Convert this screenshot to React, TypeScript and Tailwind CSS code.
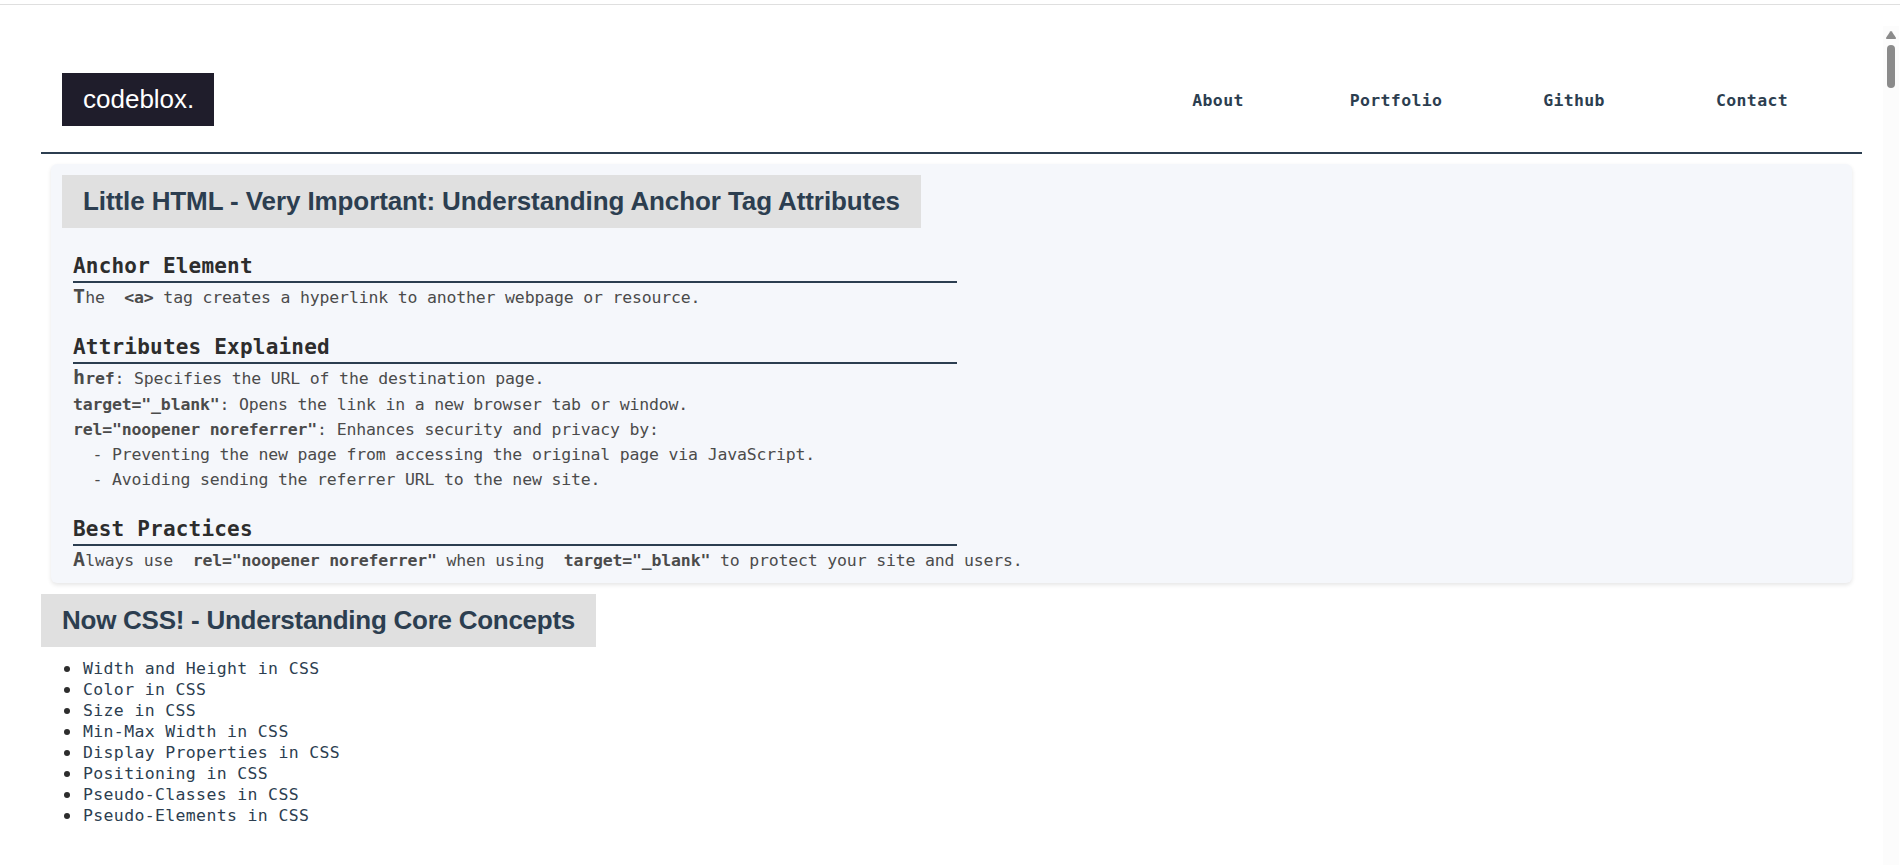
import React from "react";

const navItems = ["About", "Portfolio", "Github", "Contact"];

const topics = [
  "Width and Height in CSS",
  "Color in CSS",
  "Size in CSS",
  "Min-Max Width in CSS",
  "Display Properties in CSS",
  "Positioning in CSS",
  "Pseudo-Classes in CSS",
  "Pseudo-Elements in CSS",
];

function Topic({ title, children }: { title: string; children: React.ReactNode }) {
  return (
    <section>
      <h3 className="h-[35px] w-[884px] border-b-2 border-[#2c3e50] text-[21px] leading-[37px] font-bold tracking-[0.2px] whitespace-pre text-[#2d2d2d]">
        {title}
      </h3>
      <div className="text-[16.5px] leading-[25px] tracking-[-0.17px] whitespace-pre text-[#4b4b4b]">{children}</div>
    </section>
  );
}

function Initial({ children }: { children: string }) {
  return <span className="text-[20px] font-bold leading-none tracking-[0.2px]">{children}</span>;
}

function Scrollbar() {
  return (
    <aside className="mt-[21px] mr-px flex w-4 shrink-0 flex-col items-center bg-[#fcfcfc] pt-[5px]">
      <svg width="10" height="8" viewBox="0 0 10 8" fill="#8b8b8b">
        <path d="M4.2.5Q5-.4 5.8.5L9.8 6.4Q10.3 8 9 8H1Q-.3 8 .2 6.4Z" />
      </svg>
      <div className="mt-[6px] h-[43px] w-2 rounded-full bg-[#8b8b8b]" />
    </aside>
  );
}

export default function App() {
  return (
    <div className="flex h-[865px] flex-col overflow-hidden bg-white pt-1 font-['DejaVu_Sans_Mono','Liberation_Mono',monospace]">
      <div className="h-px shrink-0 bg-[#dfdfdf]" />
      <div className="flex min-h-0 flex-1 justify-between">
        <div className="ml-[41px] w-[1821px]">
          <header className="flex h-[149px] items-start justify-between border-b-2 border-[#2c3e50] px-[21px] pt-[68px]">
            <div className="h-[53px] w-[152px] bg-[#1f1d2b] pl-[21px] font-['Liberation_Sans',sans-serif] text-[26px] leading-[53px] text-white">
              codeblox.
            </div>
            <nav className="grid w-[712px] grid-cols-4 pt-px text-center text-[16.5px] leading-[53px] font-bold tracking-[0.35px] text-[#2c3e50]">
              {navItems.map((item) => (
                <a key={item} href="#">
                  {item}
                </a>
              ))}
            </nav>
          </header>

          <article className="mx-2.5 mt-2.5 h-[419px] rounded-[6px] bg-[#f5f7fb] pt-[11px] pl-[22px] shadow-[0_2px_4px_rgba(0,0,0,0.1)]">
            <h2 className="-ml-[11px] h-[53px] w-[859px] bg-[#e0e0e0] pl-[21px] font-['Liberation_Sans',sans-serif] text-[26px] leading-[53px] font-bold tracking-[-0.1px] whitespace-pre text-[#2c3e50]">
              Little HTML - Very Important: Understanding Anchor Tag Attributes
            </h2>
            <div className="mt-[20px] flex flex-col gap-[19px]">
              <Topic title="Anchor Element">
                <p className="h-[27px] leading-[30px]">
                  <Initial>T</Initial>he{"  "}
                  <b>{"<a>"}</b> tag creates a hyperlink to another webpage or resource.
                </p>
              </Topic>
              <Topic title="Attributes Explained">
                <p className="h-[28px] leading-[30px]">
                  <b>
                    <Initial>h</Initial>ref
                  </b>
                  : Specifies the URL of the destination page.
                </p>
                <p>
                  <b>target="_blank"</b>: Opens the link in a new browser tab or window.
                </p>
                <p>
                  <b>rel="noopener noreferrer"</b>: Enhances security and privacy by:
                </p>
                <p>{"  - Preventing the new page from accessing the original page via JavaScript."}</p>
                <p>{"  - Avoiding sending the referrer URL to the new site."}</p>
              </Topic>
              <Topic title="Best Practices">
                <p className="h-[27px] leading-[30px]">
                  <Initial>A</Initial>lways use{"  "}
                  <b>rel="noopener noreferrer"</b> when using{"  "}
                  <b>target="_blank"</b> to protect your site and users.
                </p>
              </Topic>
            </div>
          </article>

          <h2 className="mt-[11px] h-[53px] w-[555px] bg-[#e0e0e0] pl-[21px] font-['Liberation_Sans',sans-serif] text-[26px] leading-[53px] font-bold tracking-[-0.26px] whitespace-pre text-[#2c3e50]">
            Now CSS! - Understanding Core Concepts
          </h2>
          <ul className="mt-[11px] pl-[23px] text-[16.5px] leading-[21px] tracking-[0.35px] text-[#2c3e50]">
            {topics.map((topic) => (
              <li key={topic} className="flex h-[21px] items-center gap-[13px]">
                <span className="size-1.5 rounded-full bg-[#2d2d2d]" />
                <a href="#">{topic}</a>
              </li>
            ))}
          </ul>
        </div>
        <Scrollbar />
      </div>
    </div>
  );
}
